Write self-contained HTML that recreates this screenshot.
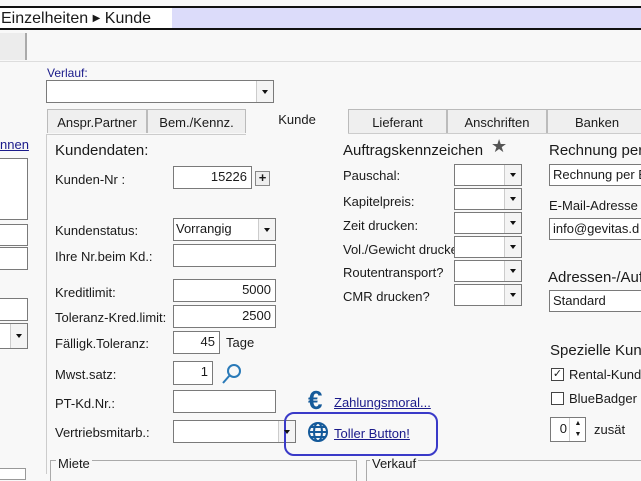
<!DOCTYPE html><html><head><style>
body{margin:0;width:641px;height:474px;background:#f8f8f8;font-family:"Liberation Sans",sans-serif;font-size:13px;color:#1a1a1a;position:relative;overflow:hidden}
.a{position:absolute;white-space:nowrap}
.in{position:absolute;background:#fff;border:1px solid #7a7a7a;box-sizing:border-box;font-size:13px;line-height:20px;padding:0 4px;white-space:nowrap;overflow:hidden}
.r{text-align:right}
.dd{position:absolute;background:#fff;border:1px solid #7a7a7a;box-sizing:border-box}
.dd::after{content:"";position:absolute;right:0;top:0;bottom:0;width:16px;border-left:1px solid #ccc;background:#f4f4f4}
.dd i{position:absolute;right:5px;top:50%;margin-top:-2px;border:3px solid transparent;border-top:4px solid #111;z-index:2}
.tab{position:absolute;top:109px;height:24px;background:#efefef;border:1px solid #bbb;border-bottom:none;box-sizing:border-box;text-align:center;line-height:26px;font-size:13px}
.h{font-size:15px}
a{color:#1a1a8a;text-decoration:underline}
</style></head><body>
<div class="a" style="left:0;top:6px;width:641px;height:24px;border-top:2px solid #111;border-bottom:2px solid #111;background:#fff;box-sizing:border-box"></div>
<div class="a" style="left:172px;top:8px;width:469px;height:20px;background:#dcdcfa"></div>
<div class="a" style="left:1px;top:8px;font-size:16px;line-height:22px">Einzelheiten <span style="font-size:10px;position:relative;top:-2px">&#9654;</span> Kunde</div>
<div class="a" style="left:0;top:33px;width:25px;height:27px;background:#ececec;border-right:2px solid #aaa"></div>
<div class="a" style="left:0;top:61px;width:641px;height:1px;background:#ddd"></div>
<div class="a" style="left:0;top:137px"><a>nnen</a></div>
<div class="in" style="left:-2px;top:158px;width:30px;height:62px"></div>
<div class="in" style="left:-2px;top:224px;width:30px;height:22px"></div>
<div class="in" style="left:-2px;top:247px;width:30px;height:23px"></div>
<div class="in" style="left:-2px;top:298px;width:30px;height:23px"></div>
<div class="dd" style="left:-2px;top:323px;width:30px;height:26px"><i></i></div>
<div class="a" style="left:-2px;top:468px;width:26px;height:10px;border:1px solid #999;background:#fff"></div>
<div class="a" style="left:47px;top:66px;font-size:12px;color:#1a1a8a">Verlauf:</div>
<div class="dd" style="left:46px;top:80px;width:228px;height:23px"><i></i></div>
<div class="tab" style="left:47px;width:100px">Anspr.Partner</div>
<div class="tab" style="left:147px;width:99px">Bem./Kennz.</div>
<div class="a" style="left:246px;top:107px;width:102px;height:28px;background:#f8f8f8;text-align:center;line-height:26px">Kunde</div>
<div class="tab" style="left:348px;width:99px">Lieferant</div>
<div class="tab" style="left:447px;width:100px">Anschriften</div>
<div class="tab" style="left:547px;width:100px">Banken</div>
<div class="a" style="left:46px;top:134px;width:1px;height:340px;background:#ccc"></div>
<div class="a" style="left:46px;top:134px;width:200px;height:1px;background:#ccc"></div>
<div class="a" style="left:348px;top:133px;width:293px;height:1px;background:#ccc"></div>
<div class="a h" style="left:55px;top:142px">Kundendaten:</div>
<div class="a" style="left:55px;top:172px">Kunden-Nr :</div>
<div class="in r" style="left:173px;top:166px;width:79px;height:23px">15226</div>
<div class="a" style="left:255px;top:171px;width:13px;height:13px;border:1px solid #888;background:#eee;font-size:13px;line-height:12px;text-align:center;font-weight:bold">+</div>
<div class="a" style="left:55px;top:223px">Kundenstatus:</div>
<div class="dd" style="left:173px;top:218px;width:103px;height:23px"><span style="position:absolute;left:2px;top:2px">Vorrangig</span><i></i></div>
<div class="a" style="left:55px;top:249px">Ihre Nr.beim Kd.:</div>
<div class="in" style="left:173px;top:244px;width:103px;height:23px"></div>
<div class="a" style="left:55px;top:285px">Kreditlimit:</div>
<div class="in r" style="left:173px;top:279px;width:103px;height:23px">5000</div>
<div class="a" style="left:55px;top:310px">Toleranz-Kred.limit:</div>
<div class="in r" style="left:173px;top:305px;width:103px;height:23px">2500</div>
<div class="a" style="left:55px;top:336px">Fälligk.Toleranz:</div>
<div class="in r" style="left:173px;top:331px;width:47px;height:23px">45</div>
<div class="a" style="left:226px;top:335px">Tage</div>
<div class="a" style="left:55px;top:367px">Mwst.satz:</div>
<div class="in r" style="left:173px;top:361px;width:40px;height:24px">1</div>
<svg class="a" style="left:220px;top:363px" width="22" height="22"><circle cx="14" cy="8" r="6" fill="none" stroke="#2a7ab8" stroke-width="2"/><line x1="10" y1="12" x2="3" y2="20" stroke="#2a7ab8" stroke-width="2"/></svg>
<div class="a" style="left:55px;top:396px">PT-Kd.Nr.:</div>
<div class="in" style="left:173px;top:390px;width:103px;height:23px"></div>
<div class="a" style="left:55px;top:425px">Vertriebsmitarb.:</div>
<div class="dd" style="left:173px;top:420px;width:123px;height:23px"><i></i></div>
<div class="a" style="left:308px;top:385px;font-size:26px;font-weight:bold;color:#155a9a">€</div>
<div class="a" style="left:334px;top:395px"><a>Zahlungsmoral...</a></div>
<div class="a" style="left:284px;top:412px;width:150px;height:40px;border:2px solid #3a3ac8;border-radius:10px"></div>
<svg class="a" style="left:307px;top:421px" width="22" height="22" fill="none" stroke="#155a9a" stroke-width="2"><circle cx="11" cy="11" r="9"/><ellipse cx="11" cy="11" rx="4" ry="9"/><line x1="2" y1="11" x2="20" y2="11"/><line x1="4" y1="6" x2="18" y2="6"/><line x1="4" y1="16" x2="18" y2="16"/></svg>
<div class="a" style="left:334px;top:426px"><a>Toller Button!</a></div>
<div class="a" style="left:50px;top:460px;width:305px;height:20px;border:1px solid #aaa;border-bottom:none"></div>
<div class="a" style="left:56px;top:456px;background:#f8f8f8;padding:0 2px">Miete</div>
<div class="a" style="left:366px;top:460px;width:280px;height:20px;border:1px solid #aaa;border-bottom:none"></div>
<div class="a" style="left:370px;top:456px;background:#f8f8f8;padding:0 2px">Verkauf</div>
<div class="a h" style="left:343px;top:142px">Auftragskennzeichen</div>
<div class="a" style="left:491px;top:136px;font-size:18px;color:#555">★</div>
<div class="a" style="left:343px;top:168px">Pauschal:</div>
<div class="a" style="left:343px;top:194px">Kapitelpreis:</div>
<div class="a" style="left:343px;top:218px">Zeit drucken:</div>
<div class="a" style="left:343px;top:242px">Vol./Gewicht drucke</div>
<div class="a" style="left:343px;top:265px">Routentransport?</div>
<div class="a" style="left:343px;top:289px">CMR drucken?</div>
<div class="dd" style="left:454px;top:164px;width:68px;height:22px"><i></i></div>
<div class="dd" style="left:454px;top:188px;width:68px;height:22px"><i></i></div>
<div class="dd" style="left:454px;top:212px;width:68px;height:22px"><i></i></div>
<div class="dd" style="left:454px;top:236px;width:68px;height:22px"><i></i></div>
<div class="dd" style="left:454px;top:260px;width:68px;height:22px"><i></i></div>
<div class="dd" style="left:454px;top:284px;width:68px;height:22px"><i></i></div>
<div class="a h" style="left:549px;top:142px">Rechnung per</div>
<div class="in" style="left:549px;top:164px;width:100px;height:22px;padding-left:3px">Rechnung per E</div>
<div class="a" style="left:549px;top:198px">E-Mail-Adresse</div>
<div class="in" style="left:549px;top:218px;width:100px;height:22px;padding-left:3px">info@gevitas.d</div>
<div class="a h" style="left:548px;top:269px">Adressen-/Auf</div>
<div class="in" style="left:549px;top:290px;width:100px;height:22px;padding-left:3px">Standard</div>
<div class="a h" style="left:550px;top:342px">Spezielle Kun</div>
<div class="a" style="left:551px;top:368px;width:11px;height:11px;border:1px solid #444;background:#fff;font-size:11px;line-height:11px;text-align:center">✓</div>
<div class="a" style="left:569px;top:367px">Rental-Kund</div>
<div class="a" style="left:551px;top:392px;width:11px;height:11px;border:1px solid #444;background:#fff"></div>
<div class="a" style="left:569px;top:391px">BlueBadger</div>
<div class="in r" style="left:550px;top:417px;width:36px;height:25px;padding-right:18px;line-height:22px">0</div>
<div class="a" style="left:569px;top:418px;width:16px;height:23px;border-left:1px solid #ccc;font-size:7px;line-height:11px;text-align:center">▲<br>▼</div>
<div class="a" style="left:594px;top:422px">zusät</div>
</body></html>
